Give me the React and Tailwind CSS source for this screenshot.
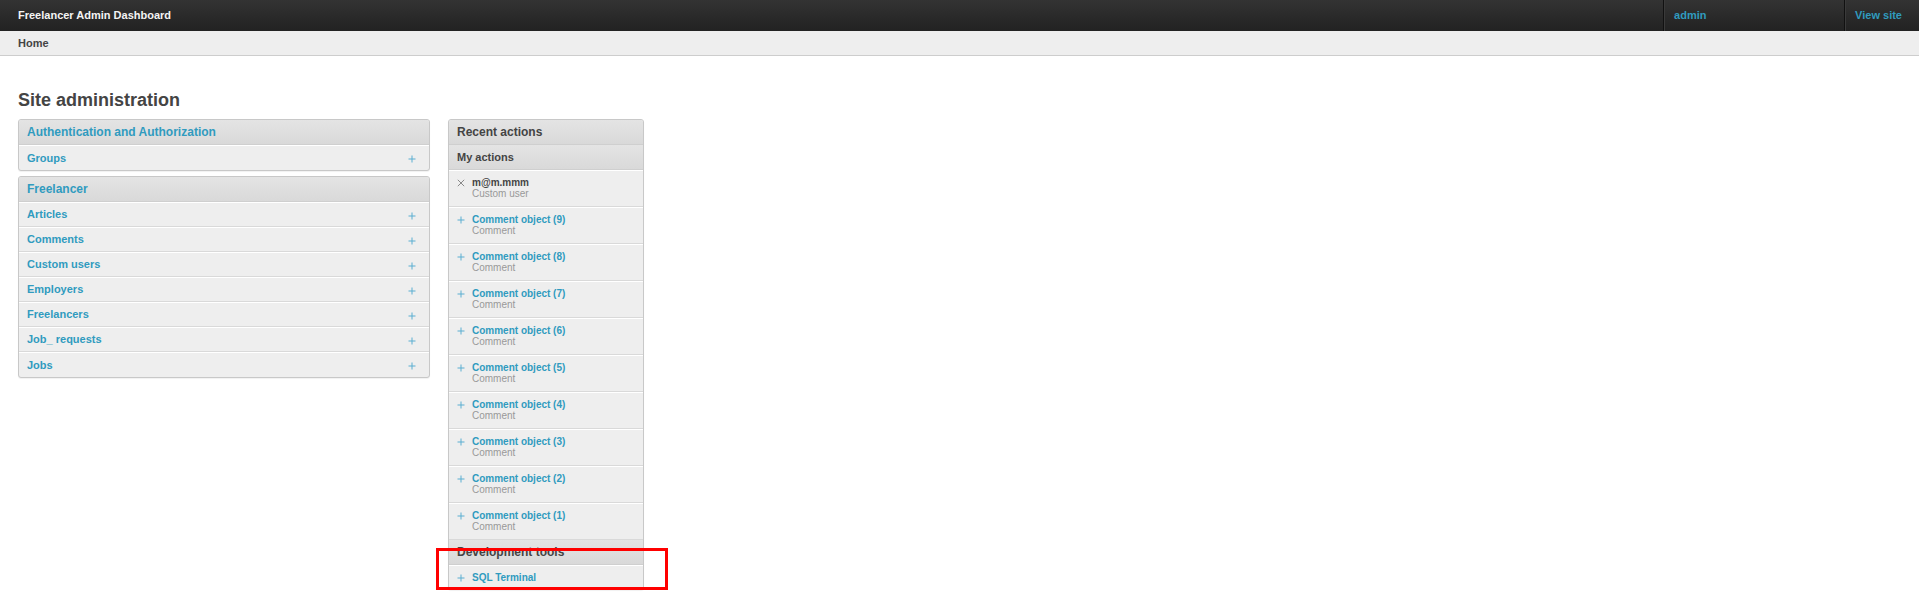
import React from 'react';

const LINK = 'text-[#309bbf]';

const PlusIcon = ({ className = '' }) => (
  <svg width="8" height="8" viewBox="0 0 8 8" className={className}>
    <path d="M4 0.5v7M0.5 4h7" stroke="#5aaed1" strokeWidth="1" fill="none" />
  </svg>
);

const CrossIcon = () => (
  <svg width="8" height="8" viewBox="0 0 8 8">
    <path d="M0.8 0.8l6.4 6.4M7.2 0.8l-6.4 6.4" stroke="#888" strokeWidth="1" fill="none" />
  </svg>
);

const apps = [
  { name: 'Authentication and Authorization', models: ['Groups'] },
  {
    name: 'Freelancer',
    models: ['Articles', 'Comments', 'Custom users', 'Employers', 'Freelancers', 'Job_ requests', 'Jobs'],
  },
];

const actions = [
  { title: 'm@m.mmm', type: 'Custom user', deleted: true },
  ...[9, 8, 7, 6, 5, 4, 3, 2, 1].map((n) => ({ title: `Comment object (${n})`, type: 'Comment' })),
];

const ModuleHeader = ({ children, className = '' }) => (
  <div
    className={`h-[25px] flex items-center px-[8px] border-b border-[#cfcfcf] bg-gradient-to-b from-[#e4e4e4] to-[#d9d9d9] font-bold ${className}`}
  >
    {children}
  </div>
);

const AppModule = ({ app }) => (
  <div className="mb-[5px] border border-[#c8c8c8] rounded-[3px] overflow-hidden bg-[#eee] shadow-[0_1px_1px_rgba(0,0,0,0.06)]">
    <ModuleHeader className={`text-[12px] ${LINK}`}>{app.name}</ModuleHeader>
    {app.models.map((m) => (
      <div
        key={m}
        className="h-[25px] flex items-center justify-between pl-[8px] pr-[13px] border-t border-white border-b border-b-[#d9d9d9] last:border-b-0"
      >
        <span className={`text-[11px] font-bold ${LINK}`}>{m}</span>
        <PlusIcon className="mt-[2px]" />
      </div>
    ))}
  </div>
);

export default function App() {
  return (
    <div className="relative min-h-[600px] bg-white text-[#444]" style={{ fontFamily: '"Liberation Sans", Arial, sans-serif' }}>
      {/* top bar */}
      <div className="h-[31px] flex items-stretch bg-gradient-to-b from-[#333] to-[#222]">
        <div className="flex-1 flex items-center pl-[18px] text-[11px] font-bold text-[#f4f4f4]">
          Freelancer Admin Dashboard
        </div>
        <div className={`w-[181px] flex items-center pl-[10px] border-l border-[#111] shadow-[inset_1px_0_0_#3a3a3a] text-[11px] font-bold ${LINK}`}>
          admin
        </div>
        <div className={`flex items-center pl-[10px] pr-[17px] border-l border-[#111] shadow-[inset_1px_0_0_#3a3a3a] text-[11px] font-bold ${LINK}`}>
          View site
        </div>
      </div>

      {/* breadcrumbs */}
      <div className="h-[25px] flex items-center pl-[18px] bg-[#eee] border-b border-[#cdcdcd] text-[11px] font-bold text-[#444]">
        Home
      </div>

      <div className="pl-[18px] pt-[33px]">
        <h1 className="text-[18px] leading-[22px] font-bold text-[#444] mb-[8px]">Site administration</h1>

        <div className="flex items-start gap-[18px]">
          <div className="w-[412px]">
            {apps.map((a) => (
              <AppModule key={a.name} app={a} />
            ))}
          </div>

          <div className="w-[196px] border border-[#c8c8c8] rounded-[3px] overflow-hidden bg-[#eee] shadow-[0_1px_1px_rgba(0,0,0,0.06)]">
            <ModuleHeader className="text-[12px] text-[#444]">Recent actions</ModuleHeader>
            <ModuleHeader className="text-[11px] text-[#444]">My actions</ModuleHeader>
            {actions.map((a) => (
              <div
                key={a.title}
                className="flex pl-[8px] pt-[6px] pb-[7px] border-t border-white border-b border-b-[#d9d9d9]"
              >
                <div className="w-[15px] pt-[2px]">{a.deleted ? <CrossIcon /> : <PlusIcon />}</div>
                <div className="text-[10px] leading-[11px]">
                  <div className={`font-bold ${a.deleted ? 'text-[#444]' : LINK}`}>{a.title}</div>
                  <div className="text-[#999]">{a.type}</div>
                </div>
              </div>
            ))}
            <ModuleHeader className="text-[12px] text-[#444]">Development tools</ModuleHeader>
            <div className="h-[24px] flex items-center pl-[8px] border-t border-white">
              <div className="w-[15px]">
                <PlusIcon />
              </div>
              <span className={`text-[10px] font-bold ${LINK}`}>SQL Terminal</span>
            </div>
          </div>
        </div>
      </div>

      {/* highlight annotation */}
      <div className="absolute left-[436px] top-[548px] w-[232px] h-[42px] border-[3px] border-[#ff0000] pointer-events-none" />
    </div>
  );
}
